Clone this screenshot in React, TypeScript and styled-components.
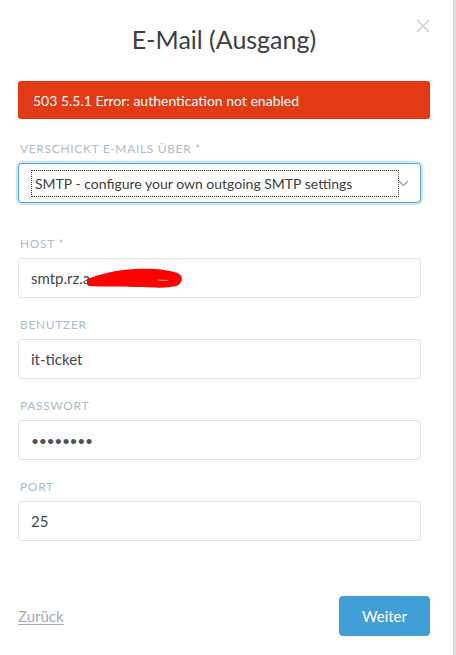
import React from "react";
import styled, { createGlobalStyle } from "styled-components";

const GlobalStyle = createGlobalStyle`
  html, body { margin: 0; padding: 0; background: #ffffff; }
  body { font-family: Lato, "Open Sans", sans-serif; color: #4a4c4f; }
  * { box-sizing: border-box; }
`;

const Page = styled.div`
  display: flex;
  width: 456px;
  height: 655px;
  overflow: hidden;
`;

const Modal = styled.div`
  flex: 0 0 453px;
  display: flex;
  flex-direction: column;
  padding: 0 23px 0 18px;
  background: #ffffff;
`;

const EdgeStrip = styled.div`
  flex: 1;
  background: #e1e3e5;
  border-left: 1px solid #d6d9dc;
`;

const Header = styled.header`
  position: relative;
  height: 81px;
  display: flex;
  align-items: center;
  justify-content: center;
  padding-bottom: 3px;
`;

const Title = styled.h1`
  margin: 0;
  font-size: 25px;
  font-weight: 400;
  line-height: 30px;
  color: #3b3e42;
`;

const CloseButton = styled.button`
  position: absolute;
  top: 18px;
  right: 0;
  width: 15px;
  height: 15px;
  padding: 0;
  border: 0;
  background: none;
  display: flex;
  align-items: center;
  justify-content: center;
`;

const ErrorBar = styled.div`
  height: 38px;
  display: flex;
  align-items: center;
  padding: 0 15px;
  background: #e23a14;
  border-radius: 3px;
  color: #ffffff;
  font-size: 14px;
`;

const Form = styled.form`
  width: 403px;
  display: flex;
  flex-direction: column;
  margin-top: 22px;
`;

const Field = styled.div<{ $gap: number }>`
  display: flex;
  flex-direction: column;
  margin-bottom: ${(p) => p.$gap}px;
`;

const Label = styled.label`
  height: 16px;
  line-height: 16px;
  margin-bottom: 6px;
  padding-left: 2px;
  font-size: 12px;
  letter-spacing: 0.055em;
  text-transform: uppercase;
  color: #abbcc7;
`;

const SelectBox = styled.div`
  height: 40px;
  display: flex;
  align-items: center;
  justify-content: space-between;
  padding: 0 11px 0 13px;
  border: 1px solid #52a5dc;
  border-radius: 4px;
  box-shadow: 0 0 0 2px #cfe5f5;
  background: #ffffff;
`;

const SelectValue = styled.span`
  width: 369px;
  height: 25px;
  display: flex;
  align-items: center;
  padding-left: 3px;
  outline: 1px dotted #333333;
  font-size: 14px;
  color: #3e4043;
  white-space: nowrap;
`;

const Input = styled.div`
  height: 40px;
  display: flex;
  align-items: center;
  padding: 0 12px;
  border: 1px solid #e1e3e5;
  border-radius: 3px;
  font-size: 15px;
  color: #45484c;
  white-space: nowrap;
`;

const Dots = styled.span`
  font-size: 14px;
  letter-spacing: -0.4px;
  color: #505357;
`;

const Footer = styled.footer`
  display: flex;
  align-items: center;
  justify-content: space-between;
  margin-top: 55px;
`;

const BackLink = styled.a`
  font-size: 15px;
  color: #a3abb3;
  text-decoration: underline;
  text-underline-offset: 2px;
`;

const PrimaryButton = styled.button`
  width: 91px;
  height: 40px;
  border: 0;
  border-radius: 4px;
  background: #419fd8;
  color: #ffffff;
  font-family: inherit;
  font-size: 15px;
`;

const Redaction = () => (
  <svg width="96" height="24" viewBox="0 0 100 24" preserveAspectRatio="none" style={{ marginLeft: -3, marginTop: 1 }}>
    <path
      d="M0 12 C14 7 30 3 50 2 C70 1 88 3 96 7 C101 10 99 17 93 19 C80 22 66 20 50 20 C34 19 16 20 2 19 C-1 17 -1 14 0 12 Z"
      fill="#ff0000"
    />
    <path d="M74 13 L84 13.5" stroke="#ff9a9a" strokeWidth="1.2" strokeLinecap="round" />
  </svg>
);

export default function App() {
  return (
    <>
      <GlobalStyle />
      <Page>
        <Modal>
          <Header>
            <Title>E-Mail (Ausgang)</Title>
            <CloseButton aria-label="close">
              <svg width="14" height="14" viewBox="0 0 14 14">
                <path d="M1 1 L13 13 M13 1 L1 13" stroke="#cfd1d3" strokeWidth="1.6" />
              </svg>
            </CloseButton>
          </Header>
          <ErrorBar>503 5.5.1 Error: authentication not enabled</ErrorBar>
          <Form>
            <Field $gap={33}>
              <Label>Verschickt E-Mails über *</Label>
              <SelectBox>
                <SelectValue>SMTP - configure your own outgoing SMTP settings</SelectValue>
                <svg width="11" height="7" viewBox="0 0 11 7">
                  <path d="M1 1 L5.5 5.5 L10 1" stroke="#a7a9ab" strokeWidth="1.6" fill="none" />
                </svg>
              </SelectBox>
            </Field>
            <Field $gap={19}>
              <Label>Host *</Label>
              <Input>
                smtp.rz.a
                <Redaction />
              </Input>
            </Field>
            <Field $gap={19}>
              <Label>Benutzer</Label>
              <Input>it-ticket</Input>
            </Field>
            <Field $gap={19}>
              <Label>Passwort</Label>
              <Input>
                <Dots>••••••••</Dots>
              </Input>
            </Field>
            <Field $gap={0}>
              <Label>Port</Label>
              <Input>25</Input>
            </Field>
          </Form>
          <Footer>
            <BackLink>Zurück</BackLink>
            <PrimaryButton>Weiter</PrimaryButton>
          </Footer>
        </Modal>
        <EdgeStrip />
      </Page>
    </>
  );
}
